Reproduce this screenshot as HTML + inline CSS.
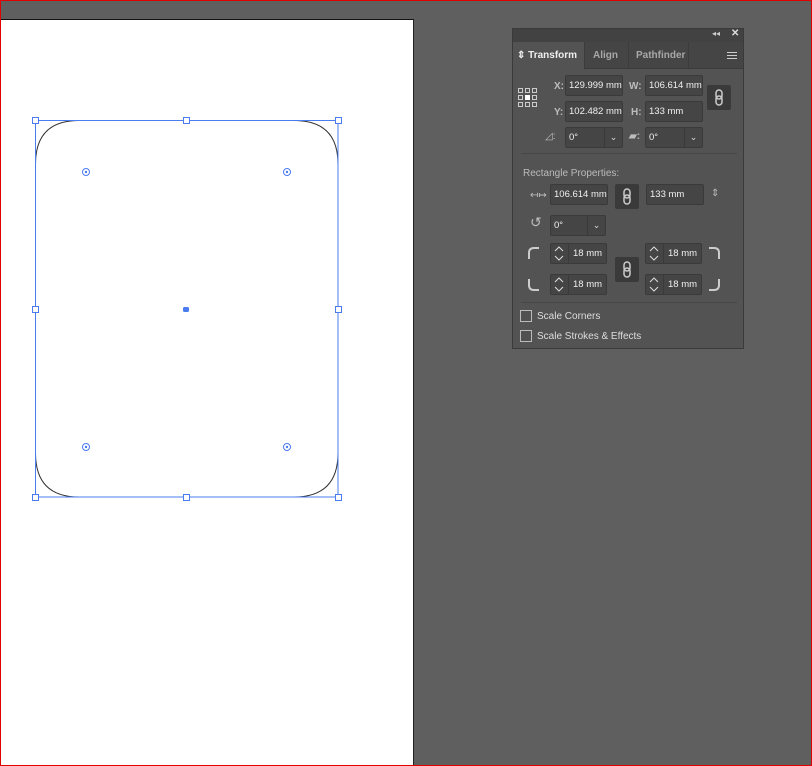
<!DOCTYPE html>
<html><head><style>
*{margin:0;padding:0;box-sizing:border-box}
body{width:812px;height:766px;background:#5f5f5f;position:relative;overflow:hidden;font-family:"Liberation Sans",sans-serif;font-size:10px;color:#ddd}
.frame{position:absolute;left:0;top:0;width:812px;height:766px;border:1px solid #e00000;z-index:9;pointer-events:none}
.art{position:absolute;left:1px;top:19px;width:413px;height:747px;background:#fff;border-top:1px solid #111;border-right:1px solid #222}
.a{position:absolute}
.panel{position:absolute;left:512px;top:28px;width:232px;height:321px;background:#535353;border:1px solid #3a3a3a}
.hdr{position:absolute;left:0;top:0;width:230px;height:13px;background:#424242}
.tabs{position:absolute;left:0;top:13px;width:230px;height:27px;background:#454545;border-bottom:1px solid #3c3c3c}
.tab{position:absolute;top:0;height:27px;line-height:27px;font-weight:bold;font-size:10px;color:#a8a8a8;border-right:1px solid #3c3c3c}
.inp{position:absolute;height:21px;background:#454545;border:1px solid #3a3a3a;border-radius:2px;color:#f0f0f0;font-size:9.5px;line-height:19px;padding-left:3px;white-space:nowrap;overflow:hidden}
.lbl{position:absolute;color:#bdbdbd;font-size:10px;font-weight:bold}
.dd{position:absolute;top:0;right:0;width:18px;height:19px;border-left:1px solid #3a3a3a;text-align:center;font-size:9px;color:#ddd;background:#454545}
.chain{position:absolute;width:24px;height:25px;background:#3a3a3a;border-radius:2px}
.cb{position:absolute;width:12px;height:12px;border:1px solid #bbb;background:#505050}
.sp{position:absolute;left:0;top:0;width:18px;height:19px;border-right:1px solid #3a3a3a}
</style></head><body>
<div class="art"></div>
<svg class="a" style="left:0;top:0" width="420" height="766">
<g fill="none" stroke="#333" stroke-width="1"><path d="M35.5 164 Q35.5 120.5 79 120.5"/><path d="M294 120.5 Q338 120.5 338 164"/><path d="M338 453 Q338 497 294 497"/><path d="M79 497 Q35.5 497 35.5 453"/></g>
<rect x="35.5" y="120.5" width="302.5" height="376.5" fill="none" stroke="#4a7cf0" stroke-width="1"/>
<g fill="#fff" stroke="#4a7cf0"><rect x="32.5" y="117.5" width="6" height="6"/><rect x="183.5" y="117.5" width="6" height="6"/><rect x="335.5" y="117.5" width="6" height="6"/><rect x="32.5" y="306.5" width="6" height="6"/><rect x="335.5" y="306.5" width="6" height="6"/><rect x="32.5" y="494.5" width="6" height="6"/><rect x="183.5" y="494.5" width="6" height="6"/><rect x="335.5" y="494.5" width="6" height="6"/></g>
<g fill="none" stroke="#4a7cf0"><circle cx="86" cy="172" r="3.5"/><circle cx="287" cy="172" r="3.5"/><circle cx="86" cy="447" r="3.5"/><circle cx="287" cy="447" r="3.5"/></g>
<g fill="#4a7cf0"><circle cx="86" cy="172" r="1.2"/><circle cx="287" cy="172" r="1.2"/><circle cx="86" cy="447" r="1.2"/><circle cx="287" cy="447" r="1.2"/><rect x="183" y="307" width="6" height="5" rx="1.5"/></g>
</svg>
<div class="panel">
<div class="hdr"><span class="a" style="left:199px;top:0;font-size:8px;color:#ccc">◂◂</span><span class="a" style="left:218px;top:-1px;font-size:10px;color:#ddd;font-weight:bold">✕</span></div>
<div class="tabs">
<div class="tab" style="left:0;width:72px;background:#535353;color:#eee;padding-left:4px">⇕ Transform</div>
<div class="tab" style="left:72px;width:44px;padding-left:8px">Align</div>
<div class="tab" style="left:116px;width:60px;padding-left:7px">Pathfinder</div>
<div class="a" style="left:214px;top:10px;width:10px;height:1px;background:#ccc;box-shadow:0 3px 0 #ccc,0 6px 0 #ccc"></div>
</div>
<svg class="a" style="left:5px;top:59px" width="20" height="20"><g fill="none" stroke="#ccc"><rect x="0.5" y="0.5" width="4" height="4"/><rect x="7.5" y="0.5" width="4" height="4"/><rect x="14.5" y="0.5" width="4" height="4"/><rect x="0.5" y="7.5" width="4" height="4"/><rect x="14.5" y="7.5" width="4" height="4"/><rect x="0.5" y="14.5" width="4" height="4"/><rect x="7.5" y="14.5" width="4" height="4"/><rect x="14.5" y="14.5" width="4" height="4"/></g><rect x="7" y="7" width="5" height="5" fill="#fff"/></svg>
<div class="lbl" style="left:41px;top:52px">X:</div><div class="inp" style="left:52px;top:46px;width:58px">129.999 mm</div>
<div class="lbl" style="left:116px;top:52px">W:</div><div class="inp" style="left:132px;top:46px;width:58px">106.614 mm</div>
<div class="lbl" style="left:41px;top:78px">Y:</div><div class="inp" style="left:52px;top:72px;width:58px">102.482 mm</div>
<div class="lbl" style="left:118px;top:78px">H:</div><div class="inp" style="left:132px;top:72px;width:58px">133 mm</div>
<div class="chain" style="left:194px;top:56px"><svg width="24" height="25"><rect x="9" y="5" width="6" height="9" rx="3" fill="none" stroke="#ccc" stroke-width="1.5"/><rect x="9" y="11" width="6" height="9" rx="3" fill="none" stroke="#ccc" stroke-width="1.5"/></svg></div>
<div class="lbl" style="left:32px;top:102px;font-weight:normal">◿:</div><div class="inp" style="left:52px;top:98px;width:58px">0°<div class="dd">⌄</div></div>
<div class="lbl" style="left:116px;top:102px">▰:</div><div class="inp" style="left:132px;top:98px;width:58px">0°<div class="dd">⌄</div></div>
<div class="a" style="left:8px;top:124px;width:216px;height:1px;background:#474747"></div>
<div class="lbl" style="left:10px;top:139px;font-weight:normal;color:#bbb">Rectangle Properties:</div>
<div class="lbl" style="left:17px;top:161px;font-weight:normal">↤↦</div>
<div class="inp" style="left:37px;top:155px;width:58px">106.614 mm</div>
<div class="chain" style="left:102px;top:155px"><svg width="24" height="25"><rect x="9" y="5" width="6" height="9" rx="3" fill="none" stroke="#ccc" stroke-width="1.5"/><rect x="9" y="11" width="6" height="9" rx="3" fill="none" stroke="#ccc" stroke-width="1.5"/></svg></div>
<div class="inp" style="left:133px;top:155px;width:58px">133 mm</div>
<div class="lbl" style="left:198px;top:159px;font-weight:normal">⇕</div>
<div class="lbl" style="left:17px;top:185px;font-size:14px;font-weight:normal">↺</div>
<div class="inp" style="left:37px;top:186px;width:56px">0°<div class="dd">⌄</div></div>
<div class="inp" style="left:37px;top:214px;width:57px;padding-left:22px"><div class="sp"></div>18 mm</div>
<div class="inp" style="left:37px;top:245px;width:57px;padding-left:22px"><div class="sp"></div>18 mm</div>
<div class="inp" style="left:132px;top:214px;width:57px;padding-left:22px"><div class="sp"></div>18 mm</div>
<div class="inp" style="left:132px;top:245px;width:57px;padding-left:22px"><div class="sp"></div>18 mm</div>
<svg class="a" style="left:37px;top:214px" width="160" height="52"><g fill="none" stroke="#ddd"><path d="M5 8l4-4 4 4M5 13l4 4 4-4M5 39l4-4 4 4M5 44l4 4 4-4"/><path transform="translate(95 0)" d="M5 8l4-4 4 4M5 13l4 4 4-4M5 39l4-4 4 4M5 44l4 4 4-4"/></g></svg>
<div class="chain" style="left:102px;top:228px"><svg width="24" height="25"><rect x="9" y="5" width="6" height="9" rx="3" fill="none" stroke="#ccc" stroke-width="1.5"/><rect x="9" y="11" width="6" height="9" rx="3" fill="none" stroke="#ccc" stroke-width="1.5"/></svg></div>
<svg class="a" style="left:14px;top:214px" width="210" height="52"><g fill="none" stroke="#ccc" stroke-width="2"><path d="M2 16V10Q2 5 7 5h5"/><path d="M2 36v6q0 5 5 5h5"/><path d="M182 5h5q5 0 5 5v6"/><path d="M182 47h5q5 0 5-5v-6"/></g></svg>
<div class="a" style="left:8px;top:273px;width:216px;height:1px;background:#474747"></div>
<div class="cb" style="left:7px;top:281px"></div><div class="a" style="left:24px;top:282px;color:#ddd">Scale Corners</div>
<div class="cb" style="left:7px;top:301px"></div><div class="a" style="left:24px;top:302px;color:#ddd">Scale Strokes &amp; Effects</div>
</div>
<div class="frame"></div>
</body></html>
